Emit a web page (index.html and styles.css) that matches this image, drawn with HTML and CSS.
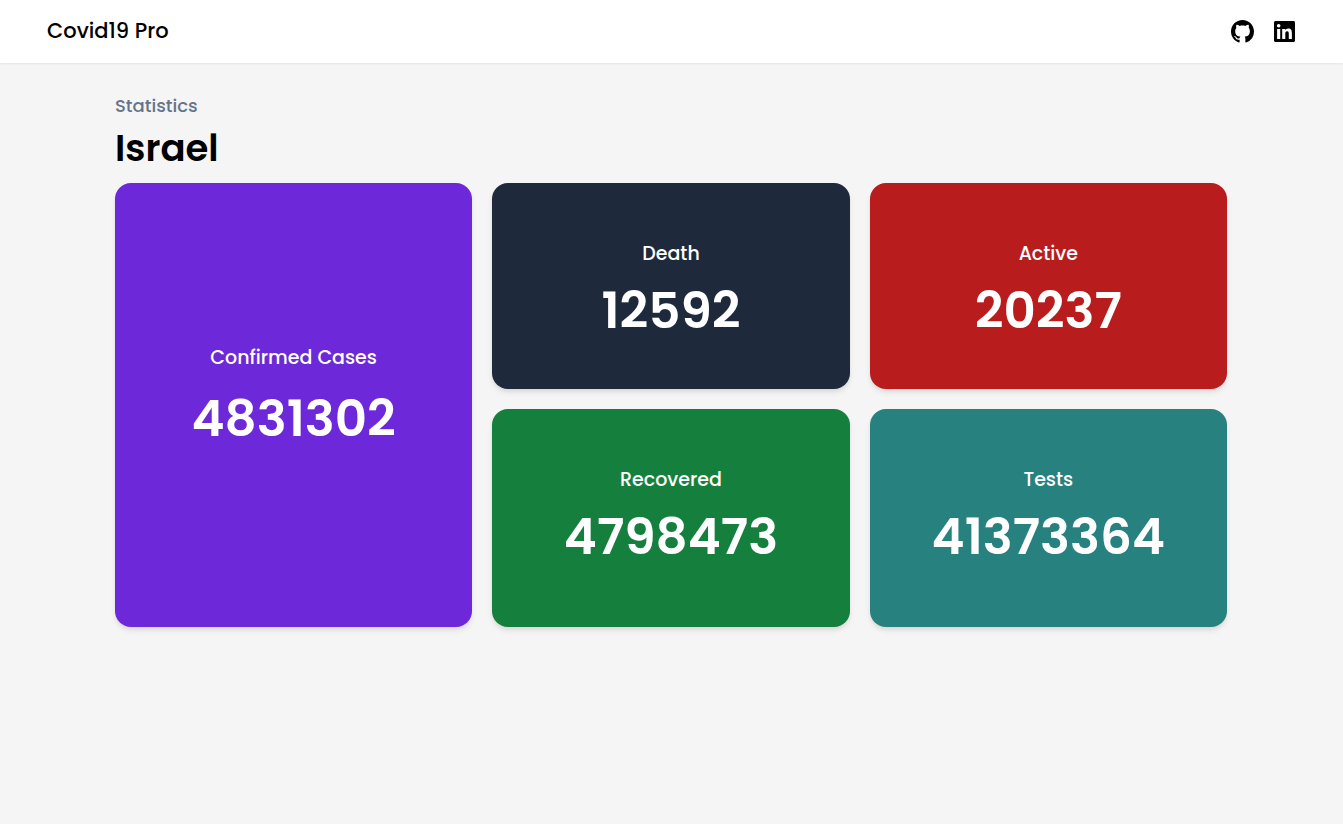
FILE: index.html
```html
<!DOCTYPE html>
<html lang="en">
<head>
<meta charset="utf-8">
<meta name="viewport" content="width=device-width, initial-scale=1">
<title>Covid19 Pro</title>
<link rel="stylesheet" href="styles.css">
</head>
<body>
<header class="navbar">
  <a class="brand" href="#">Covid19 Pro</a>
  <nav class="social">
    <a href="#" aria-label="GitHub">
      <svg class="icon icon-github" viewBox="0 0 16 16" aria-hidden="true"><path d="M8 0C3.58 0 0 3.58 0 8c0 3.54 2.29 6.53 5.47 7.59.4.07.55-.17.55-.38 0-.19-.01-.82-.01-1.49-2.01.37-2.53-.49-2.69-.94-.09-.23-.48-.94-.82-1.13-.28-.15-.68-.52-.01-.53.63-.01 1.08.58 1.23.82.72 1.21 1.87.87 2.33.66.07-.52.28-.87.51-1.07-1.78-.2-3.64-.89-3.64-3.95 0-.87.31-1.59.82-2.15-.08-.2-.36-1.02.08-2.12 0 0 .67-.21 2.2.82.64-.18 1.32-.27 2-.27s1.36.09 2 .27c1.53-1.04 2.2-.82 2.2-.82.44 1.1.16 1.92.08 2.12.51.56.82 1.27.82 2.15 0 3.07-1.87 3.75-3.65 3.95.29.25.54.73.54 1.48 0 1.07-.01 1.93-.01 2.2 0 .21.15.46.55.38A8.01 8.01 0 0 0 16 8c0-4.42-3.58-8-8-8z"/></svg>
    </a>
    <a href="#" aria-label="LinkedIn">
      <svg class="icon icon-linkedin" viewBox="3 3 18 18" aria-hidden="true"><path d="M18.335 18.339H15.67v-4.177c0-.996-.02-2.278-1.39-2.278-1.389 0-1.601 1.084-1.601 2.205v4.25h-2.666V9.75h2.56v1.17h.035c.358-.674 1.228-1.387 2.528-1.387 2.7 0 3.2 1.778 3.2 4.091v4.715zM7.003 8.575a1.546 1.546 0 0 1-1.548-1.549 1.548 1.548 0 1 1 1.547 1.549zm1.336 9.764H5.666V9.75H8.34v8.589zM19.67 3H4.329C3.593 3 3 3.58 3 4.297v15.406C3 20.42 3.594 21 4.328 21h15.338C20.4 21 21 20.42 21 19.703V4.297C21 3.58 20.4 3 19.666 3h.003z"/></svg>
    </a>
  </nav>
</header>
<main class="page">
  <p class="eyebrow">Statistics</p>
  <h1 class="country">Israel</h1>
  <section class="stats">
    <article class="card card-confirmed">
      <h2 class="label">Confirmed Cases</h2>
      <p class="value">4831302</p>
    </article>
    <article class="card card-death">
      <h2 class="label">Death</h2>
      <p class="value">12592</p>
    </article>
    <article class="card card-active">
      <h2 class="label">Active</h2>
      <p class="value">20237</p>
    </article>
    <article class="card card-recovered">
      <h2 class="label">Recovered</h2>
      <p class="value">4798473</p>
    </article>
    <article class="card card-tests">
      <h2 class="label">Tests</h2>
      <p class="value">41373364</p>
    </article>
  </section>
</main>
</body>
</html>
```
FILE: styles.css
```css
* {
  box-sizing: border-box;
  margin: 0;
}

body {
  background: #f5f5f5;
  color: #000;
  font-family: Poppins, Inter, sans-serif;
  font-weight: 500;
}

a {
  color: inherit;
  text-decoration: none;
}

.navbar {
  display: flex;
  align-items: center;
  justify-content: space-between;
  padding: 16px 48px 17px 47px;
  background: #fff;
  box-shadow: 0 1px 2px rgba(0, 0, 0, 0.08);
}

.brand {
  font-size: 21px;
  line-height: 30px;
}

.social {
  display: flex;
  align-items: center;
  gap: 20px;
}

.icon {
  display: block;
  fill: currentColor;
}

.icon-github {
  width: 23px;
  height: 23px;
}

.icon-linkedin {
  width: 21px;
  height: 21px;
}

.page {
  max-width: 1153px;
  margin: 0 auto;
  padding: 29px 21px 29px 20px;
}

.eyebrow {
  color: #64748b;
  font-size: 18px;
  line-height: 28px;
}

.country {
  margin-bottom: 7px;
  font-size: 37px;
  font-weight: 600;
  line-height: 56px;
}

.stats {
  display: grid;
  grid-template-columns: repeat(3, 1fr);
  gap: 20px;
}

.card {
  padding: 57px 20px 47px;
  border-radius: 16px;
  color: #fff;
  text-align: center;
  box-shadow: 0 4px 6px -1px rgba(0, 0, 0, 0.1), 0 2px 4px -1px rgba(0, 0, 0, 0.06);
}

.label {
  margin-bottom: 12px;
  font-size: 19px;
  font-weight: 500;
  line-height: 28px;
}

.value {
  font-size: 50px;
  font-weight: 600;
  line-height: 62px;
}

.card-confirmed {
  display: flex;
  flex-direction: column;
  justify-content: center;
  grid-row: span 2;
  padding-bottom: 73px;
  background: #6d28d9;
}

.card-confirmed .label {
  margin-bottom: 16px;
}

.card-death {
  background: #1e293b;
}

.card-active {
  background: #b91c1c;
}

.card-recovered {
  padding-bottom: 59px;
  background: #15803d;
}

.card-tests {
  padding-bottom: 59px;
  background: #27817e;
}
```
